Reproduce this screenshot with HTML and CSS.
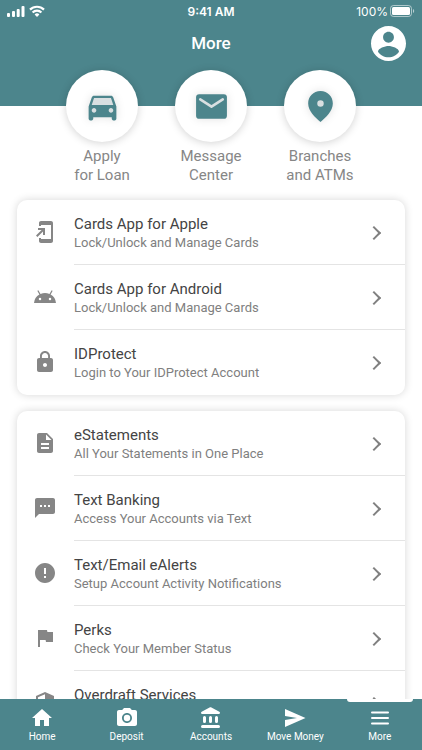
FILE: index.html
```html
<!DOCTYPE html>
<html lang="en">
<head>
<meta charset="utf-8">
<meta name="viewport" content="width=device-width, initial-scale=1">
<title>More</title>
<link rel="stylesheet" href="styles.css">
</head>
<body>
<div class="app">
  <header class="header">
    <div class="status">
      <div class="status-left">
        <svg width="18" height="11" viewBox="0 0 18 11" aria-hidden="true"><rect x="0" y="7" width="3" height="4" rx="1"/><rect x="5" y="5" width="3" height="6" rx="1"/><rect x="9.700" y="3" width="3" height="8" rx="1"/><rect x="14.500" y="0" width="3" height="11" rx="1"/></svg>
        <svg width="16" height="12" viewBox="0 0 16 12" aria-hidden="true"><g fill="none" stroke="#fff" stroke-width="2.200"><path d="M1 4.600a10 10 0 0 1 14 0"/><path d="M3.600 7.500a6.200 6.200 0 0 1 8.800 0"/></g><path d="M5.600 9.400a3.400 3.400 0 0 1 4.800 0L8 11.900z"/></svg>
      </div>
      <time class="clock">9:41 AM</time>
      <div class="status-right">
        <span>100%</span>
        <svg width="25" height="12" viewBox="0 0 25 12" aria-hidden="true"><rect x=".5" y=".5" width="21" height="11" rx="3" fill="none" stroke="#fff" stroke-opacity=".55"/><rect x="2" y="2" width="18" height="8" rx="1.500"/><path d="M23 4v4c1.600-.7 1.600-3.300 0-4z" fill-opacity=".6"/></svg>
      </div>
    </div>
    <div class="titlebar">
      <h1 class="title">More</h1>
      <button class="profile" type="button" aria-label="Profile">
        <svg viewBox="2 2 20 20" aria-hidden="true"><path d="M12 2C6.480 2 2 6.480 2 12s4.480 10 10 10 10-4.480 10-10S17.520 2 12 2zm0 3.300c1.660 0 3.100 1.340 3.100 3.100s-1.440 3.100-3.100 3.100-3.100-1.340-3.100-3.100S10.340 5.300 12 5.300zm0 14.600c-2.500 0-4.710-1.280-6-3.220.03-1.990 4-3.280 6-3.280s5.970 1.290 6 3.280c-1.290 1.940-3.500 3.220-6 3.220z"/></svg>
      </button>
    </div>
  </header>

  <main class="content">
    <nav class="shortcuts" aria-label="Shortcuts">
      <a class="shortcut" href="#loan">
        <span class="disc"><svg viewBox="0 0 24 24" aria-hidden="true"><path class="cut" d="M6 6h12l2.500 6v5h-17v-5z"/><path d="M18.920 6.010C18.720 5.420 18.160 5 17.500 5h-11c-.66 0-1.210.42-1.420 1.010L3 12v8c0 .55.450 1 1 1h1c.55 0 1-.45 1-1v-1h12v1c0 .55.450 1 1 1h1c.55 0 1-.45 1-1v-8l-2.080-5.990zM6.500 16c-.83 0-1.500-.67-1.500-1.500S5.670 13 6.500 13s1.500.67 1.500 1.500S7.330 16 6.500 16zm11 0c-.83 0-1.500-.67-1.500-1.500s.67-1.500 1.500-1.500 1.500.67 1.500 1.500-.67 1.500-1.500 1.500zM5 11l1.500-4.500h11L19 11H5z"/></svg></span>
        <span>Apply<br>for Loan</span>
      </a>
      <a class="shortcut" href="#messages">
        <span class="disc"><svg viewBox="0 0 24 24" aria-hidden="true"><rect x="2" y="4" width="20" height="16" rx="2"/><path d="M4.700 7.400 12 12.100l7.300-4.700" fill="none" stroke="#d9dfe1" stroke-width="1.700" stroke-linecap="round" stroke-linejoin="round"/></svg></span>
        <span>Message<br>Center</span>
      </a>
      <a class="shortcut" href="#branches">
        <span class="disc"><svg viewBox="0 0 24 24" aria-hidden="true"><circle class="cut" cx="12" cy="10.200" r="4"/><path d="M12 2C7.300 2 4 5.700 4 10c0 5.100 4.600 9 8 12 3.400-3 8-6.900 8-12 0-4.300-3.300-8-8-8zm0 10.200a2.100 2.100 0 1 1 0-4.200 2.100 2.100 0 0 1 0 4.200z"/></svg></span>
        <span>Branches<br>and ATMs</span>
      </a>
    </nav>

    <ul class="card">
      <li><a class="row" href="#apple">
        <svg class="icon" viewBox="0 0 24 24" aria-hidden="true"><path d="M18 1.010 8 1c-1.100 0-2 .9-2 2v3h2V5h10v14H8v-1H6v3c0 1.100.9 2 2 2h10c1.100 0 2-.9 2-2V3c0-1.100-.9-1.990-2-1.990zM10 15h2V8H5v2h3.590L3 15.590 4.410 17 10 11.410z"/></svg>
        <span class="text"><span class="name">Cards App for Apple</span><span class="note">Lock/Unlock and Manage Cards</span></span>
      </a></li>
      <li><a class="row" href="#android">
        <svg class="icon" viewBox="0 0 24 24" aria-hidden="true"><path d="m17.600 9.480 1.840-3.180c.16-.31.040-.69-.26-.85a.637.637 0 0 0-.83.22l-1.880 3.240a11.463 11.463 0 0 0-8.940 0L5.650 5.670a.643.643 0 0 0-.87-.2c-.28.18-.37.540-.22.830L6.400 9.480A10.780 10.780 0 0 0 1 18h22a10.780 10.780 0 0 0-5.400-8.520zM7 15.250a1.250 1.250 0 1 1 0-2.500 1.250 1.250 0 0 1 0 2.500zm10 0a1.250 1.250 0 1 1 0-2.500 1.250 1.250 0 0 1 0 2.500z"/></svg>
        <span class="text"><span class="name">Cards App for Android</span><span class="note">Lock/Unlock and Manage Cards</span></span>
      </a></li>
      <li><a class="row" href="#idprotect">
        <svg class="icon" viewBox="0 0 24 24" aria-hidden="true"><path d="M18 8h-1V6c0-2.760-2.240-5-5-5S7 3.240 7 6v2H6c-1.100 0-2 .9-2 2v10c0 1.100.9 2 2 2h12c1.100 0 2-.9 2-2V10c0-1.100-.9-2-2-2zm-6 9c-1.100 0-2-.9-2-2s.9-2 2-2 2 .9 2 2-.9 2-2 2zm3.100-9H8.900V6c0-1.710 1.390-3.100 3.100-3.100s3.100 1.390 3.100 3.100v2z"/></svg>
        <span class="text"><span class="name">IDProtect</span><span class="note">Login to Your IDProtect Account</span></span>
      </a></li>
    </ul>

    <ul class="card">
      <li><a class="row" href="#estatements">
        <svg class="icon" viewBox="0 0 24 24" aria-hidden="true"><path d="M14 2H6c-1.100 0-1.990.9-1.990 2L4 20c0 1.100.890 2 1.990 2H18c1.100 0 2-.9 2-2V8l-6-6zm2 16H8v-2h8v2zm0-4H8v-2h8v2zm-3-5V3.500L18.500 9H13z"/></svg>
        <span class="text"><span class="name">eStatements</span><span class="note">All Your Statements in One Place</span></span>
      </a></li>
      <li><a class="row" href="#text-banking">
        <svg class="icon" viewBox="0 0 24 24" aria-hidden="true"><path d="M20 2H4c-1.100 0-1.990.9-1.990 2L2 22l4-4h14c1.100 0 2-.9 2-2V4c0-1.100-.9-2-2-2zM9 11H7V9h2v2zm4 0h-2V9h2v2zm4 0h-2V9h2v2z"/></svg>
        <span class="text"><span class="name">Text Banking</span><span class="note">Access Your Accounts via Text</span></span>
      </a></li>
      <li><a class="row" href="#alerts">
        <svg class="icon" viewBox="0 0 24 24" aria-hidden="true"><path d="M12 2C6.480 2 2 6.480 2 12s4.480 10 10 10 10-4.480 10-10S17.520 2 12 2zm1 15h-2v-2h2v2zm0-4h-2V7h2v6z"/></svg>
        <span class="text"><span class="name">Text/Email eAlerts</span><span class="note">Setup Account Activity Notifications</span></span>
      </a></li>
      <li><a class="row" href="#perks">
        <svg class="icon" viewBox="0 0 24 24" aria-hidden="true"><path d="M14.400 6 14 4H5v17h2v-7h5.600l.4 2h7V6z"/></svg>
        <span class="text"><span class="name">Perks</span><span class="note">Check Your Member Status</span></span>
      </a></li>
      <li><a class="row" href="#overdraft">
        <svg class="icon" viewBox="0 0 24 24" aria-hidden="true"><path d="M12 1 3 5v6c0 5.550 3.840 10.740 9 12 5.160-1.260 9-6.450 9-12V5l-9-4zm0 10.990h7c-.53 4.120-3.280 7.790-7 8.940V12H5V6.300l7-3.110v8.800z"/></svg>
        <span class="text"><span class="name">Overdraft Services</span></span>
      </a></li>
    </ul>
  </main>

  <nav class="tabs" aria-label="Main">
    <a class="tab" href="#home"><svg viewBox="0 0 24 24" aria-hidden="true"><path d="M10 20v-6h4v6h5v-8h3L12 3 2 12h3v8z"/></svg><span>Home</span></a>
    <a class="tab" href="#deposit"><svg viewBox="0 0 24 24" aria-hidden="true"><path d="M9 2 7.170 4H4c-1.100 0-2 .9-2 2v12c0 1.100.9 2 2 2h16c1.100 0 2-.9 2-2V6c0-1.100-.9-2-2-2h-3.170L15 2H9zm3 15c-2.760 0-5-2.240-5-5s2.240-5 5-5 5 2.240 5 5-2.240 5-5 5z"/><circle cx="12" cy="12" r="3.200"/></svg><span>Deposit</span></a>
    <a class="tab" href="#accounts"><svg viewBox="0 0 24 24" aria-hidden="true"><path d="M4 11.500v4a1.500 1.500 0 0 0 3 0v-4a1.500 1.500 0 0 0-3 0zm6 0v4a1.500 1.500 0 0 0 3 0v-4a1.500 1.500 0 0 0-3 0zM3.500 22h16a1.500 1.500 0 0 0 0-3h-16a1.500 1.500 0 0 0 0 3zM16 11.500v4a1.500 1.500 0 0 0 3 0v-4a1.500 1.500 0 0 0-3 0zM10.570 1.490l-7.900 4.160C2.260 5.870 2 6.300 2 6.770 2 7.450 2.550 8 3.230 8h16.550c.67 0 1.220-.55 1.220-1.230 0-.47-.26-.9-.67-1.120l-7.900-4.160c-.58-.31-1.280-.31-1.860 0z"/></svg><span>Accounts</span></a>
    <a class="tab" href="#move"><svg viewBox="0 0 24 24" aria-hidden="true"><path d="m2 21 20.500-9L2 3v7l12 2-12 2z"/></svg><span>Move Money</span></a>
    <a class="tab current" href="#more" aria-current="page"><svg viewBox="0 0 24 24" aria-hidden="true"><path d="M4 6.500h16M4 12h16M4 17.500h16" fill="none" stroke="#fff" stroke-width="2" stroke-linecap="round"/></svg><span>More</span></a>
  </nav>
</div>
</body>
</html>
```
FILE: styles.css
```css
:root {
  --teal: #4c858c;
  --name: #444;
  --muted: #808080;
  --icon: #868686;
}

* {
  box-sizing: border-box;
}

body {
  margin: 0;
  font-family: Roboto, "Liberation Sans", sans-serif;
  background: #fff;
}

a {
  color: inherit;
  text-decoration: none;
}

svg {
  display: block;
  fill: currentColor;
}

.app {
  display: flex;
  flex-direction: column;
  height: 100vh;
}

/* Header */
.header {
  flex: none;
  height: 106px;
  color: #fff;
  background: var(--teal);
}

.status {
  display: grid;
  grid-template-columns: 1fr auto 1fr;
  align-items: center;
  height: 22px;
  padding: 0 7px;
  font-family: Inter, sans-serif;
  font-size: 12px;
}

.status-left,
.status-right {
  display: flex;
  align-items: center;
  gap: 4px;
}

.status-right {
  justify-content: flex-end;
  gap: 2px;
}

.clock {
  font-weight: 600;
}

.titlebar {
  display: grid;
  grid-template-columns: 1fr auto 1fr;
  align-items: center;
  height: 42px;
  padding: 0 16px;
}

.title {
  grid-column: 2;
  margin: 0;
  font-size: 17px;
  font-weight: 500;
}

.profile {
  justify-self: end;
  width: 35px;
  height: 35px;
  padding: 0;
  border: 0;
  color: #fff;
  background: none;
}

/* Scrolling content starts over the lower part of the header */
.content {
  flex: 1;
  min-height: 0;
  margin-top: -46px;
  padding: 10px 17px 16px;
  overflow-y: auto;
  scrollbar-width: none;
}

.shortcuts {
  display: flex;
  justify-content: center;
  margin-bottom: 15px;
}

.shortcut {
  display: flex;
  flex-direction: column;
  align-items: center;
  gap: 5px;
  width: 109px;
  font-size: 15px;
  line-height: 19px;
  text-align: center;
  color: #868686;
}

.disc {
  display: grid;
  place-items: center;
  width: 72px;
  height: 72px;
  border-radius: 50%;
  color: var(--teal);
  background: #fff;
  box-shadow: 0 1px 8px rgba(0, 0, 0, 0.18);
}

.disc svg {
  width: 37px;
  height: 37px;
  filter: drop-shadow(0 0 4px rgba(0, 0, 0, 0.12));
}

.cut {
  fill: #d9dfe1;
}

/* Cards */
.card {
  margin: 0 0 16px;
  padding: 0;
  list-style: none;
  border-radius: 10px;
  background: #fff;
  box-shadow: 0 0 8px rgba(0, 0, 0, 0.16);
}

.row {
  display: flex;
  align-items: stretch;
  gap: 17px;
  height: 65px;
  padding-left: 16px;
}

.icon {
  flex: none;
  width: 24px;
  height: 24px;
  margin-top: 20px;
  color: var(--icon);
}

.text {
  flex: 1;
  position: relative;
  padding-top: 14px;
  border-bottom: 1px solid #e4e4e4;
}

.card li:last-child .text {
  border-bottom-color: transparent;
}

.text::after {
  content: "";
  position: absolute;
  top: 28px;
  right: 26px;
  width: 8px;
  height: 8px;
  border: solid #808080;
  border-width: 2px 2px 0 0;
  transform: rotate(45deg);
}

.name,
.note {
  display: block;
}

.name {
  font-size: 15px;
  line-height: 20px;
  color: var(--name);
}

.note {
  font-size: 13px;
  line-height: 18px;
  color: var(--muted);
}

/* Bottom tabs */
.tabs {
  display: grid;
  grid-template-columns: repeat(5, 1fr);
  flex: none;
  height: 51px;
  color: #fff;
  background: var(--teal);
}

.tab {
  display: flex;
  flex-direction: column;
  align-items: center;
  position: relative;
  padding-top: 7px;
  font-size: 10px;
  line-height: 14px;
}

.tab svg {
  width: 24px;
  height: 24px;
}

.current::before {
  content: "";
  position: absolute;
  top: 0;
  width: 66px;
  height: 3px;
  border-radius: 0 0 3px 3px;
  background: #fff;
}
```
